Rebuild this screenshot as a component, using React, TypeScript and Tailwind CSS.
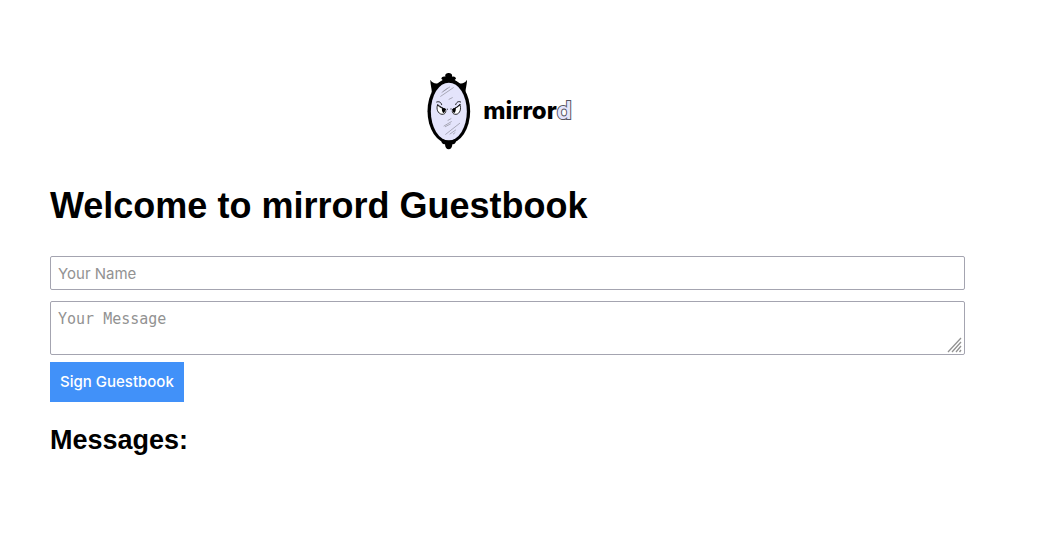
function MirrorIcon() {
  return (
    <svg viewBox="33 21 132 234" className="h-[78px] w-11 shrink-0" aria-hidden="true">
      <path d="M47 84 C49 76 43 60 43 44 C48 53 57 57 65 55 C69 52 74 48 80 45 L76 41 C77 36 82 33 88 35 C86 28 91 24 98 24 C105 24 110 28 108 35 C114 33 119 36 120 41 L116 45 C122 48 127 52 131 55 C139 57 148 53 153 44 C153 60 147 76 149 84 Z" />
      <path d="M76 226 C75 233 80 239 87 238 C87 247 92 253 98 253 C104 253 109 247 109 238 C116 239 121 233 120 226 Z" />
      <ellipse cx="98.500" cy="139" rx="64" ry="96" />
      <ellipse cx="98.500" cy="139.500" rx="54" ry="86.500" fill="#e4e4fb" />
      <g stroke="#92929d" strokeWidth="2.200" strokeLinecap="round">
        <path d="M78 82 L101 66 M74 94 L112 68 M83 78 L94 70 M99 103 L109 98" />
        <path d="M96 166 L105 161 M84 183 L106 170 M88 185 L103 177 M89 208 L131 175 M102 207 L119 195 M112 207 L117 203" />
      </g>
      <g fill="#fff" stroke="#000" strokeWidth="2.500">
        <path d="M65 119 C60 131 65 146 78 148 C90 148 91 138 88 132 C82 131 74 126 65 119 Z" />
        <path d="M131 118 C137 130 132 147 120 148 C108 148 107 138 111 132 C118 130 125 125 131 118 Z" />
      </g>
      <path d="M78 129 L87 132 C88 138 86 144 82 144 C78 141 77 134 78 129 Z" />
      <path d="M119 129 L111 132 C109 138 111 143 115 144 C119 141 120 134 119 129 Z" />
      <g fill="none" stroke="#000" strokeWidth="2.500" strokeLinecap="round">
        <path d="M62 111 C69 108 76 112 77 119 M64 120 C73 129 82 130 89 133 M134 111 C127 107 121 112 119 119 M133 119 C124 128 117 130 110 133" />
        <path d="M94 132 L94 134 M105 131 L105 133" strokeWidth="2" />
      </g>
    </svg>
  );
}

export default function App() {
  return (
    <main className="bg-white pt-[72px] pr-[77px] pb-12 pl-[50px] font-['Liberation_Sans',Arial,sans-serif] text-black">
      <div className="flex items-center justify-center gap-3 pr-4">
        <MirrorIcon />
        <div className="font-[Inter,sans-serif] text-2xl font-extrabold">
          mirror
          <span className="font-semibold text-[#e4e4fb] [-webkit-text-stroke:2px_#555562] [paint-order:stroke_fill]">
            d
          </span>
        </div>
      </div>

      <h1 className="mt-9 text-4xl font-bold">Welcome to mirrord Guestbook</h1>

      <form className="mt-[30px] flex flex-col items-start" onSubmit={(e) => e.preventDefault()}>
        <input
          type="text"
          aria-label="Your Name"
          placeholder="Your Name"
          className="h-[34px] w-full rounded-xs border border-[#a4a4b0] px-[7px] font-[Inter,sans-serif] text-[15px] placeholder:text-[#929292]"
        />
        <div className="relative mt-[11px] flex w-full">
          <textarea
            aria-label="Your Message"
            placeholder="Your Message"
            className="h-[54px] w-full resize-none rounded-xs border border-[#a4a4b0] px-[7px] py-2 font-['DejaVu_Sans_Mono',monospace] text-[15px] leading-[18px] placeholder:text-[#929292]"
          />
          <svg
            viewBox="0 0 16 16"
            className="pointer-events-none absolute right-0.5 bottom-0.5 size-4"
            fill="none"
            stroke="#929292"
            strokeWidth="1.300"
            aria-hidden="true"
          >
            <path d="M1 15 L14 1 M5 15 L14 5 M9 15 L14 9 M12.500 15 L14 13" />
          </svg>
        </div>
        <button
          type="submit"
          className="mt-[7px] h-10 bg-[#4191f9] px-2.5 font-[Inter,sans-serif] text-[15px] font-medium text-white"
        >
          Sign Guestbook
        </button>
      </form>

      <h2 className="mt-5 text-[27px] leading-9 font-bold">Messages:</h2>
    </main>
  );
}
